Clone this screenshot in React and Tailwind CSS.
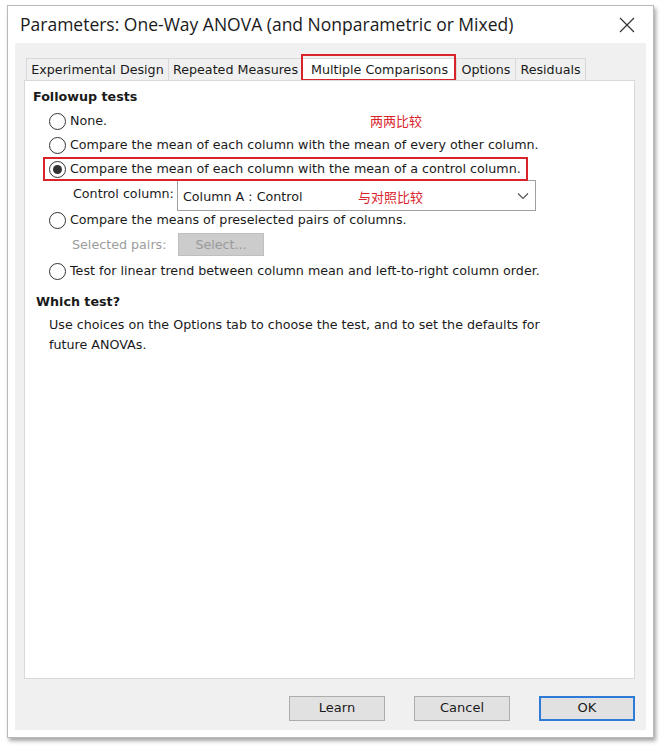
import React from "react";

const ui = { fontFamily: '"DejaVu Sans", Verdana, sans-serif' };
const cjk = { fontFamily: '"Noto Sans CJK SC", sans-serif' };

function Radio({ checked }) {
  return (
    <span className="w-[17px] h-[17px] rounded-full border border-[#333] bg-white flex items-center justify-center shrink-0">
      {checked && <span className="w-[9px] h-[9px] rounded-full bg-[#333]" />}
    </span>
  );
}

function RadioRow({ checked, children, className = "" }) {
  return (
    <div className={"flex items-center gap-[4px] pl-[24px] text-[12.7px] text-[#1a1a1a] " + className}>
      <Radio checked={checked} />
      <span>{children}</span>
    </div>
  );
}

function Tab({ children, active, w }) {
  return (
    <div
      className={
        "h-[22px] flex items-center justify-center text-[12.7px] border border-b-0 border-[#d9d9d9] -mr-px " +
        (active ? "bg-white text-[#1a1a1a]" : "bg-[#f0f0f0] text-[#1a1a1a]")
      }
      style={{ width: w }}
    >
      {children}
    </div>
  );
}

function Btn({ children, primary }) {
  return (
    <div
      className={
        "w-[96px] h-[25px] flex items-center justify-center text-[13px] text-[#1a1a1a] bg-[#e1e1e1] " +
        (primary ? "border-2 border-[#2f7ad6]" : "border border-[#adadad]")
      }
    >
      {children}
    </div>
  );
}

export default function App() {
  return (
    <div className="w-[660px] h-[747px] bg-white pt-[5px] pl-[7px]" style={ui}>
      <div className="w-[647px] h-[733px] bg-white border border-[#b9b9b9] shadow-[2px_3px_4px_rgba(0,0,0,0.35)] flex flex-col">
        <div className="h-[37px] flex items-center justify-between pl-[12px] pr-[18px]">
          <span className="text-[17.5px] text-[#1a1a1a]" style={{ fontFamily: '"Open Sans", "Noto Sans", sans-serif' }}>
            Parameters: One-Way ANOVA (and Nonparametric or Mixed)
          </span>
          <svg width="16" height="16" viewBox="0 0 16 16">
            <path d="M1 1 L15 15 M15 1 L1 15" stroke="#333" strokeWidth="1.2" fill="none" />
          </svg>
        </div>
        <div className="flex-1 mx-[7px] mb-[7px] bg-[#f0f0f0] flex flex-col pl-[9px] pr-[11px]">
          <div className="flex items-end h-[37px] pl-[2px]">
            <Tab w={143}>Experimental Design</Tab>
            <Tab w={135}>Repeated Measures</Tab>
            <div className="relative">
              <Tab w={155} active>Multiple Comparisons</Tab>
              <div className="absolute -left-[1px] -top-[4px] w-[155px] h-[27px] border-2 border-[#d9232b]" />
            </div>
            <Tab w={60}>Options</Tab>
            <Tab w={71}>Residuals</Tab>
          </div>
          <div className="h-[599px] bg-white border border-[#d9d9d9] relative">
            <div className="pl-[8px] pt-[6px] text-[12.7px] font-bold text-[#1a1a1a] h-[28px]">Followup tests</div>
            <RadioRow className="h-[24px]">None.</RadioRow>
            <RadioRow className="h-[24px]">Compare the mean of each column with the mean of every other column.</RadioRow>
            <div className="relative">
              <RadioRow checked className="h-[24px]">Compare the mean of each column with the mean of a control column.</RadioRow>
              <div className="absolute left-[18px] top-[0px] w-[485px] h-[24px] border-2 border-[#d9232b]" />
            </div>
            <div className="flex items-start h-[30px] pl-[48px] text-[12.7px] text-[#1a1a1a]">
              <span className="pt-[3px] w-[104px]">Control column:</span>
              <div className="w-[359px] h-[31px] -mt-[1px] border border-[#a0a0a0] bg-white flex items-center justify-between pl-[5px] pr-[6px]">
                <span className="pt-[3px]">Column A : Control</span>
                <svg width="12" height="8" viewBox="0 0 12 8">
                  <path d="M1 1.5 L6 6.5 L11 1.5" stroke="#555" strokeWidth="1.2" fill="none" />
                </svg>
              </div>
            </div>
            <RadioRow className="h-[18px]">Compare the means of preselected pairs of columns.</RadioRow>
            <div className="flex items-center h-[31px] pl-[47px] text-[12.7px] text-[#9c9c9c]">
              <span className="w-[106px]">Selected pairs:</span>
              <div className="w-[86px] h-[23px] bg-[#cccccc] border border-[#bfbfbf] flex items-center justify-center text-[#9a9a9a]">
                Select...
              </div>
            </div>
            <RadioRow className="h-[22px]">Test for linear trend between column mean and left-to-right column order.</RadioRow>
            <div className="pl-[11px] pt-[10px] text-[12.7px] font-bold text-[#1a1a1a] h-[33px]">Which test?</div>
            <div className="pl-[24px] text-[12.7px] leading-[20px] text-[#1a1a1a] w-[545px]">
              Use choices on the Options tab to choose the test, and to set the defaults for future ANOVAs.
            </div>
            <span className="absolute left-[345px] top-[30px] text-[13px] text-[#d9232b]" style={cjk}>两两比较</span>
            <span className="absolute left-[333px] top-[106px] text-[13px] text-[#d9232b]" style={cjk}>与对照比较</span>
          </div>
          <div className="flex-1 flex items-center justify-end gap-[29px] pt-[7px]">
            <Btn>Learn</Btn>
            <Btn>Cancel</Btn>
            <Btn primary>OK</Btn>
          </div>
        </div>
      </div>
    </div>
  );
}
